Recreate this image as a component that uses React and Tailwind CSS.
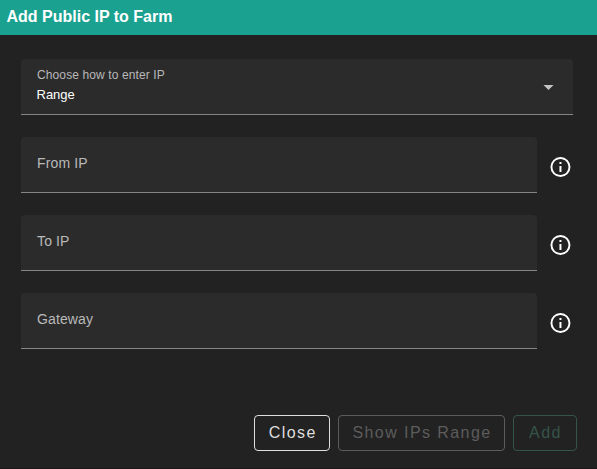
function InfoIcon() {
  return (
    <svg viewBox="0 0 24 24" className="ml-[11px] mt-1 size-6 shrink-0 fill-white">
      <g transform="translate(0.45 0)">
        <path d="M11 9h2V7h-2m1 13c-4.41 0-8-3.59-8-8s3.59-8 8-8 8 3.59 8 8-3.59 8-8 8m0-18A10 10 0 0 0 2 12a10 10 0 0 0 10 10 10 10 0 0 0 10-10A10 10 0 0 0 12 2m-1 15h2v-6h-2v6z" />
      </g>
    </svg>
  );
}

function Field({ label }) {
  return (
    <div className="flex items-center">
      <div className="h-14 w-[516px] rounded-t border-b border-[#858585] bg-[#2b2b2b] px-4 pt-4 text-sm leading-5 tracking-[0.13px] text-[#b9b9b9]">
        {label}
      </div>
      <InfoIcon />
    </div>
  );
}

const button =
  "flex h-9 items-center justify-center rounded border text-base tracking-[1.43px]";

export default function App() {
  return (
    <div className="flex h-[469px] w-[597px] flex-col overflow-hidden border-b border-[#1d1619] bg-[#222222] font-['Liberation_Sans',Arial,sans-serif]">
      <header className="h-[35px] bg-[#1ba190] pl-[6.5px] pt-[5px] text-base font-bold leading-6 text-white">
        Add Public IP to Farm
      </header>
      <main className="flex flex-col gap-[22px] pl-[21px] pt-6">
        <div className="flex h-14 w-[552px] items-center justify-between rounded-t border-b border-[#858585] bg-[#2b2b2b] pl-4 pr-[19px]">
          <div className="-mt-[3px]">
            <div className="text-xs leading-5 tracking-[0.11px] text-[#b9b9b9]">Choose how to enter IP</div>
            <div className="-ml-[0.5px] text-[13px] leading-5 text-white">Range</div>
          </div>
          <svg viewBox="0 0 11 5" className="mt-px h-[5px] w-[11px] fill-[#c4c4c4]">
            <path d="M0.5 0h10L5.5 5z" />
          </svg>
        </div>
        <Field label="From IP" />
        <Field label="To IP" />
        <Field label="Gateway" />
      </main>
      <footer className="mt-[66px] flex justify-end gap-2 pr-5">
        <button className={`${button} w-[76px] border-[#dedede] pl-[1.5px] text-[#dedede]`}>Close</button>
        <button className={`${button} w-[167px] border-[#5c5c5c] pl-px text-[#5c5c5c]`}>Show IPs Range</button>
        <button className={`${button} w-16 border-[#355449] pl-px text-[#355449]`}>Add</button>
      </footer>
    </div>
  );
}
